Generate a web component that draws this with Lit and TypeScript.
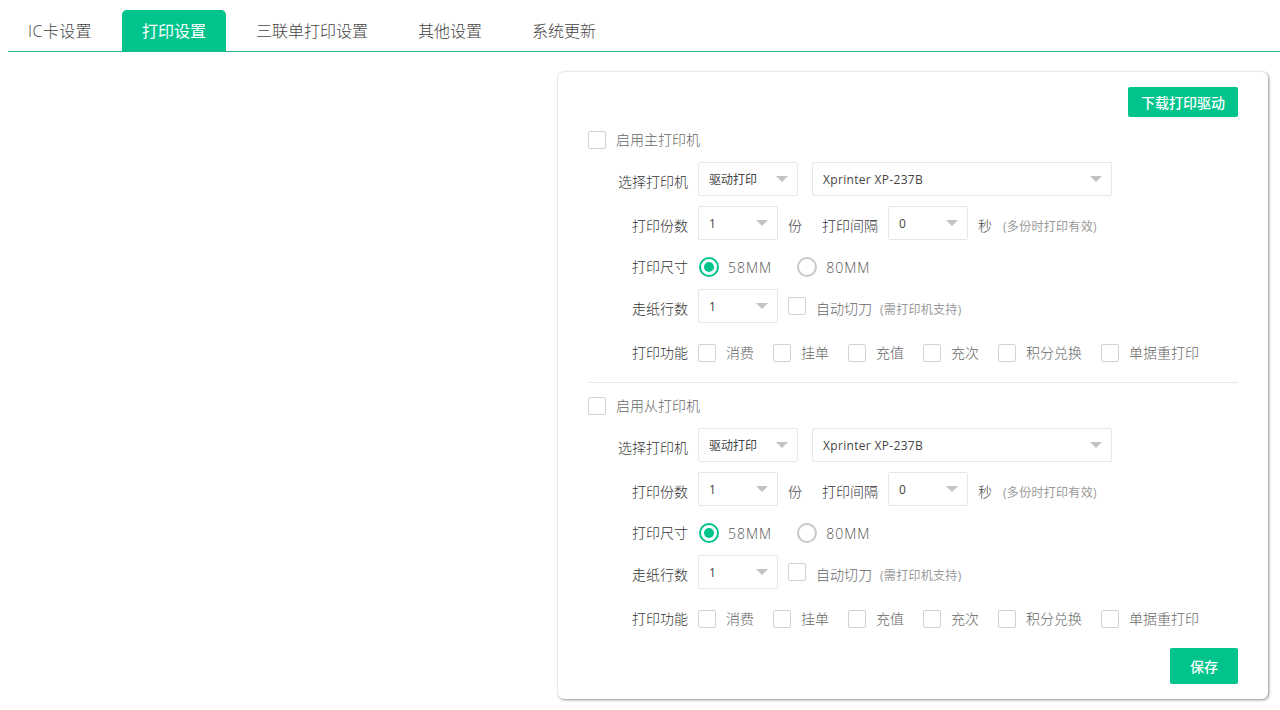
import { LitElement, html, css } from "lit";
import { customElement } from "lit/decorators.js";

const tabs = ["IC卡设置", "打印设置", "三联单打印设置", "其他设置", "系统更新"];
const funcs = ["消费", "挂单", "充值", "充次", "积分兑换", "单据重打印"];

@customElement("app-root")
export class AppRoot extends LitElement {
  static styles = css`
    :host { display: block; font-family: "Open Sans", "Noto Sans CJK SC", sans-serif; color: #333; font-size: 14px; background: #fff; height: 710px; overflow: hidden; }
    .tabs { display: flex; margin: 10px 0 0 8px; height: 41px; border-bottom: 1px solid #1fb690; }
    .tab { padding: 0 20px; margin-right: 10px; font-size: 16px; line-height: 42px; height: 41px; border-radius: 5px 5px 0 0; color: #444; font-weight: 300; }
    .tab.ic { letter-spacing: .4px; }
    .tab.on { background: #00c48c; color: #fff; font-weight: 400; }
    .wrap { display: flex; justify-content: flex-end; padding: 20px 12px 0 0; }
    .card { width: 710px; height: 627px; box-sizing: border-box; padding: 15px 30px; border-radius: 6px; background: #fff; box-shadow: 1px 1px 3px rgba(0,0,0,.4), 0 0 2px rgba(0,0,0,.15); display: flex; flex-direction: column; }
    .btn { background: #00c48c; color: #fff; border-radius: 2px; display: flex; align-items: center; justify-content: center; align-self: flex-end; font-weight: 500; }
    .dl { width: 110px; height: 30px; font-size: 14px; margin-bottom: 14px; }
    .save { width: 68px; height: 36px; font-size: 14px; margin-top: 12px; }
    .chk { width: 16px; height: 16px; border: 1px solid #d2d2d2; border-radius: 2px; background: #fff; flex: none; }
    .title { display: flex; align-items: center; height: 18px; gap: 10px; color: #666; font-weight: 300; }
    .title .t { padding-bottom: 2px; }
    .row { display: flex; align-items: center; height: 34px; }
    .r1 { margin-top: 13px; }
    .r2 { margin-top: 10px; }
    .r3 { margin-top: 10px; }
    .r4 { margin-top: 5px; }
    .r5 { margin-top: 13px; }
    .label { width: 100px; margin-right: 10px; text-align: right; flex: none; color: #333; font-weight: 300; white-space: nowrap; }
    .low { padding-top: 4px; }
    .up { padding-bottom: 2px; }
    .sel { position: relative; border: 1px solid #e6e6e6; border-radius: 2px; font-size: 12px; line-height: 34px; padding-left: 10px; flex: none; color: #444; box-sizing: border-box; height: 34px; font-weight: 400; }
    .sel.x { letter-spacing: .32px; }
    .sel::after { content: ""; position: absolute; right: 9px; top: 13px; border: 6px solid transparent; border-top-color: #c2c2c2; border-bottom-width: 0; }
    .w100 { width: 100px; }
    .w80 { width: 80px; }
    .w300 { width: 300px; margin-left: 14px; }
    .unit { margin-left: 10px; color: #444; font-weight: 300; }
    .inter { margin-left: 20px; margin-right: 10px; color: #333; font-weight: 300; }
    .hint { font-size: 12px; color: #999; margin-left: 11px; letter-spacing: .3px; padding-top: 6px; }
    .radio { width: 16px; height: 16px; border: 2px solid #c8c8c8; border-radius: 50%; flex: none; display: flex; align-items: center; justify-content: center; }
    .radio.on { border-color: #00c48c; }
    .radio.on::before { content: ""; width: 10px; height: 10px; border-radius: 50%; background: #00c48c; }
    .rt { margin-left: 9px; color: #555; font-weight: 300; letter-spacing: 1px; }
    .rg { margin-left: 1px; }
    .rg2 { margin-left: 25px; }
    .item { display: flex; align-items: center; gap: 10px; color: #666; font-weight: 300; margin-right: 19px; }
    .item span:last-child { padding-bottom: 2px; }
    .ck2 { margin-left: 10px; }
    .ck2t { margin-left: 10px; color: #666; font-weight: 300; }
    .tiny { margin-left: 8px; }
    .div { height: 1px; background: #e6e6e6; margin: 12px 0 14px; flex: none; }
  `;

  section(title: string) {
    return html`
      <div class="title"><span class="chk"></span><span class="t">${title}</span></div>
      <div class="row r1">
        <span class="label low">选择打印机</span>
        <div class="sel w100">驱动打印</div>
        <div class="sel w300 x">Xprinter XP-237B</div>
      </div>
      <div class="row r2">
        <span class="label low">打印份数</span>
        <div class="sel w80">1</div>
        <span class="unit low">份</span>
        <span class="inter low">打印间隔</span>
        <div class="sel w80">0</div>
        <span class="unit low">秒</span>
        <span class="hint">(多份时打印有效)</span>
      </div>
      <div class="row r3">
        <span class="label up">打印尺寸</span>
        <span class="radio on rg"></span><span class="rt">58MM</span>
        <span class="radio rg2"></span><span class="rt">80MM</span>
      </div>
      <div class="row r4">
        <span class="label low">走纸行数</span>
        <div class="sel w80">1</div>
        <span class="chk ck2"></span>
        <span class="ck2t low">自动切刀</span>
        <span class="hint tiny">(需打印机支持)</span>
      </div>
      <div class="row r5">
        <span class="label up">打印功能</span>
        ${funcs.map((f) => html`<div class="item"><span class="chk"></span><span>${f}</span></div>`)}
      </div>
    `;
  }

  render() {
    return html`
      <div class="tabs">
        ${tabs.map((t, i) => html`<div class="tab ${i === 1 ? "on" : ""} ${i === 0 ? "ic" : ""}">${t}</div>`)}
      </div>
      <div class="wrap">
        <div class="card">
          <div class="btn dl">下载打印驱动</div>
          ${this.section("启用主打印机")}
          <div class="div"></div>
          ${this.section("启用从打印机")}
          <div class="btn save">保存</div>
        </div>
      </div>
    `;
  }
}
